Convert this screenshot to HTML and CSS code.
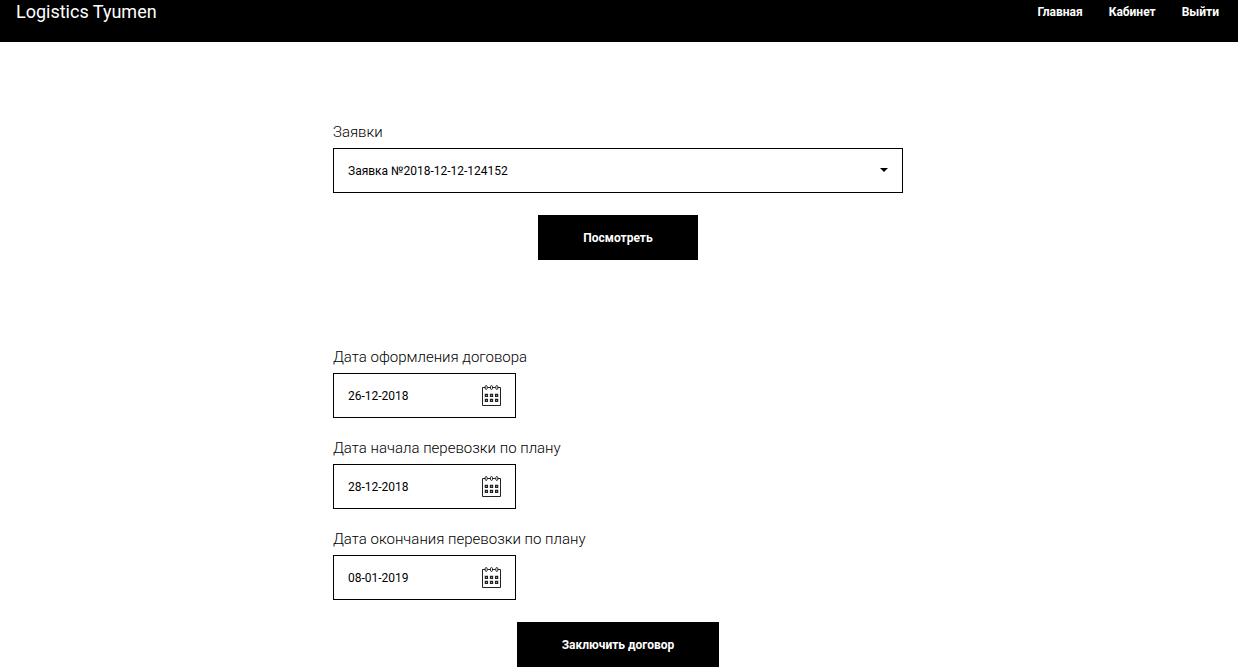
FILE: index.html
```html
<!DOCTYPE html>
<html lang="ru">
<head>
<meta charset="utf-8">
<meta name="viewport" content="width=device-width, initial-scale=1">
<title>Logistics Tyumen</title>
<link rel="stylesheet" href="styles.css">
</head>
<body>
<svg class="sprite" aria-hidden="true">
  <symbol id="calendar" viewBox="0 0 19 21">
    <g fill="none" stroke="#222" stroke-width="1">
      <path d="M3 2.500H.5v18h18v-18H16M5.500 2.500H8M11 2.500h2.500"/>
      <rect x="3.200" y=".6" width="2" height="3.800" rx="1"/>
      <rect x="8.500" y=".6" width="2" height="3.800" rx="1"/>
      <rect x="13.800" y=".6" width="2" height="3.800" rx="1"/>
      <path stroke-width="1.300" d="M3.400 9.300h2v2h-2zM8.500 9.300h2v2h-2zM13.600 9.300h2v2h-2zM3.400 14.300h2v2h-2zM8.500 14.300h2v2h-2zM13.600 14.300h2v2h-2z"/>
    </g>
  </symbol>
</svg>
<header class="header">
  <a class="logo" href="#">Logistics Tyumen</a>
  <nav class="nav">
    <a class="nav-link" href="#">Главная</a>
    <a class="nav-link" href="#">Кабинет</a>
    <a class="nav-link" href="#">Выйти</a>
  </nav>
</header>
<main class="main">
  <form class="form">
    <div class="field">
      <label class="label" for="request">Заявки</label>
      <div class="control">
        <select class="input" id="request"><option>Заявка №2018-12-12-124152</option></select>
        <svg class="arrow" viewBox="0 0 8 4" aria-hidden="true"><path d="M0 0h8L4 4z"/></svg>
      </div>
    </div>
    <button class="button" type="button">Посмотреть</button>
  </form>
  <form class="form">
    <div class="field">
      <label class="label" for="signed">Дата оформления договора</label>
      <div class="control control-date">
        <input class="input" id="signed" type="text" value="26-12-2018">
        <svg class="calendar" aria-hidden="true"><use href="#calendar"/></svg>
      </div>
    </div>
    <div class="field">
      <label class="label" for="start">Дата начала перевозки по плану</label>
      <div class="control control-date">
        <input class="input" id="start" type="text" value="28-12-2018">
        <svg class="calendar" aria-hidden="true"><use href="#calendar"/></svg>
      </div>
    </div>
    <div class="field">
      <label class="label" for="end">Дата окончания перевозки по плану</label>
      <div class="control control-date">
        <input class="input" id="end" type="text" value="08-01-2019">
        <svg class="calendar" aria-hidden="true"><use href="#calendar"/></svg>
      </div>
    </div>
    <button class="button" type="button">Заключить договор</button>
  </form>
</main>
</body>
</html>
```
FILE: styles.css
```css
* {
  box-sizing: border-box;
}

body {
  margin: 0;
  background: #fff;
  color: #000;
  font-family: Roboto, "Liberation Sans", sans-serif;
}

.sprite {
  display: none;
}

.header {
  display: flex;
  justify-content: space-between;
  padding: 0 19px 18px 16px;
  background: #000;
  line-height: 24px;
}

.logo,
.nav-link {
  color: #fff;
  text-decoration: none;
}

.logo {
  font-size: 18px;
}

.nav {
  display: flex;
  gap: 26px;
  font-size: 12px;
  font-weight: 700;
}

.main {
  display: flex;
  flex-direction: column;
  align-items: center;
  gap: 85px;
  padding: 78px 22px 4px 20px;
}

.form {
  display: flex;
  flex-direction: column;
  gap: 22px;
  width: 100%;
  max-width: 570px;
}

.field {
  display: flex;
  flex-direction: column;
  gap: 4px;
}

.label {
  font-size: 15px;
  font-weight: 300;
  line-height: 24px;
}

.form .field + .field {
  margin-top: -4px;
}

.control {
  position: relative;
}

.control-date {
  width: 183px;
}

.input {
  display: block;
  width: 100%;
  height: 45px;
  margin: 0;
  padding: 0 14px;
  border: 1px solid #000;
  border-radius: 0;
  background: #fff;
  color: #000;
  font: 400 12px Roboto, "Liberation Sans", sans-serif;
  appearance: none;
}

.arrow {
  position: absolute;
  top: 20px;
  right: 15px;
  width: 8px;
  height: 4px;
}

.calendar {
  position: absolute;
  top: 12px;
  right: 15px;
  width: 19px;
  height: 21px;
  pointer-events: none;
}

.button {
  align-self: center;
  height: 45px;
  padding: 0 45px;
  border: 0;
  background: #000;
  color: #fff;
  font: 700 12px Roboto, "Liberation Sans", sans-serif;
}
```
